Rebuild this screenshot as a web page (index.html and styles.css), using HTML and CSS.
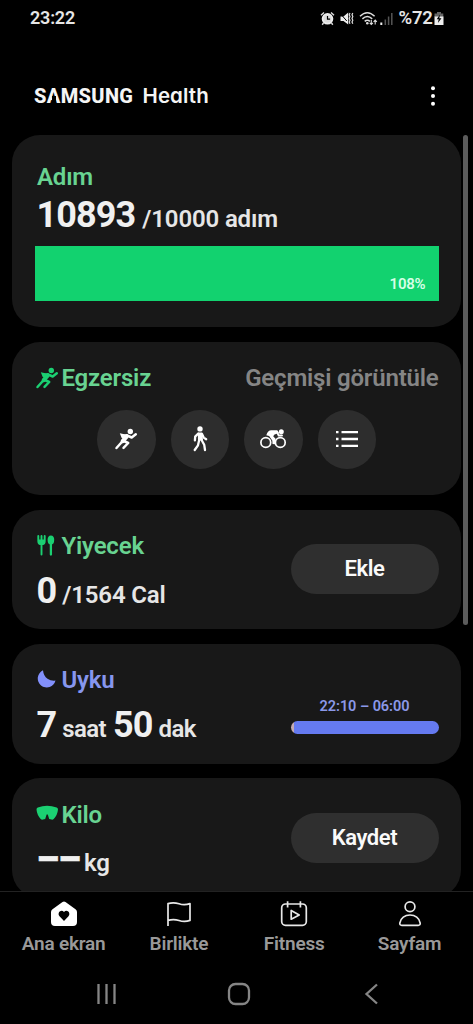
FILE: index.html
```html
<!DOCTYPE html>
<html lang="tr">
<head>
<meta charset="utf-8">
<title>Samsung Health</title>
<link rel="stylesheet" href="styles.css">
</head>
<body>
<svg class="defs" width="0" height="0" aria-hidden="true">
  <symbol id="runner" viewBox="0 0 24 24">
    <circle cx="16.300" cy="4.500" r="2.700"/>
    <path d="M5.800 6.200l3.400.9 5 .3-4.300 4.300-2.200-.7-.9-2.200z"/>
    <path d="M12.700 9.300L8.800 14" fill="none" stroke="currentColor" stroke-width="4.300" stroke-linecap="round"/>
    <path d="M8.300 14.500L2.500 21M13.500 8.700l4.200 1.800 4.100-3.200M9.800 14l4.400 2-4.700 4.800" fill="none" stroke="currentColor" stroke-width="2.500" stroke-linecap="round" stroke-linejoin="round"/>
  </symbol>
</svg>
<div class="screen">
  <div class="statusbar">
    <span class="clock">23:22</span>
    <div class="status-icons">
      <svg class="alarm" viewBox="0 0 15 15"><circle cx="7.500" cy="7.800" r="4.500" fill="none" stroke="#eee" stroke-width="2.600"/><circle cx="7.500" cy="7.800" r="4" fill="#ddd"/><path d="M7.500 5v3.200h2.600" fill="none" stroke="#000" stroke-width="1.200"/><path d="M1 4.200L4 1.500M14 4.200l-3-2.700M3.500 12l-1.300 1.700M11.500 12l1.300 1.700" stroke="#ddd" stroke-width="1.400"/></svg>
      <svg class="mute" viewBox="0 0 15 15"><path d="M1.500 5.500h3L9.200 1.500v12L4.500 10h-3z" fill="#eee"/><path d="M.8 2l7 8" stroke="#000" stroke-width="1"/><path d="M11 2l-.8 1.800.8 1.800-.8 1.800.8 1.800-.8 1.800.8 1.800M13.800 2l-.8 1.800.8 1.800-.8 1.800.8 1.800-.8 1.800.8 1.800" fill="none" stroke="#ddd" stroke-width="1.200"/></svg>
      <svg class="wifi" viewBox="0 0 19 15"><path d="M1 5.300q7.300-7.200 14.600 0M3.400 7.900q4.900-4.700 9.800 0M5.700 10.400q2.600-2.400 5.200 0" fill="none" stroke="#ddd" stroke-width="1.500"/><circle cx="8.300" cy="12.300" r="1.300" fill="#ddd"/><path d="M12.300 9v4.300M10.700 11.800l1.600 1.700 1.600-1.700M16.200 13.500V9.200M14.600 10.800l1.600-1.700 1.600 1.700" fill="none" stroke="#ddd" stroke-width="1.100"/></svg>
      <svg class="signal" viewBox="0 0 13 13"><path d="M1.300 10.500V13" stroke="#eee" stroke-width="2"/><path d="M5.300 7.500V13M8.600 4.500V13M11.800 1V13" stroke="#555" stroke-width="1.500"/></svg>
      <span class="battery-level">%72</span>
      <svg class="battery" viewBox="0 0 10 15"><path d="M3 1h4v1.500h2.300V6H.5V2.500H3z" fill="#666"/><path d="M.5 5.500h9V14h-9z" fill="#eee"/><path d="M6 3.500L2.700 8.300h2l-.8 3.700L7.500 7.200H5.300z" fill="#000"/></svg>
    </div>
  </div>
  <header class="header">
    <div class="brand"><span class="samsung">S<span class="peak">A</span>MSUNG</span><span class="health">Health</span></div>
    <svg class="more" viewBox="0 0 6 20"><circle cx="3" cy="2.300" r="2"/><circle cx="3" cy="10" r="2"/><circle cx="3" cy="17.700" r="2"/></svg>
  </header>
  <main class="cards">
    <section class="card steps">
      <h2 class="title">Adım</h2>
      <p class="value"><b class="count">10893</b><span class="goal">/10000 adım</span></p>
      <div class="progress">108%</div>
    </section>
    <section class="card exercise">
      <div class="row">
        <h2 class="title"><svg class="icon run"><use href="#runner"/></svg>Egzersiz</h2>
        <span class="history">Geçmişi görüntüle</span>
      </div>
      <div class="activities">
        <span class="activity"><svg width="24" height="24"><use href="#runner"/></svg></span>
        <span class="activity"><svg width="26" height="28" viewBox="0 0 26 28"><circle cx="13" cy="3.900" r="2.700"/><path d="M10.800 7.500h4.300l.9 7.500-5 .4z"/><path d="M11 8.700l-2.800 2.900-.3 3.700M15 9l1.700 3.600 2.500 1.600M12.300 14.500l-1.300 5.800-3.300 4.700M14.300 14.500l2.900 5.200.8 5.300" fill="none" stroke="currentColor" stroke-width="2.300" stroke-linecap="round" stroke-linejoin="round"/></svg></span>
        <span class="activity"><svg width="28" height="22" viewBox="0 0 28 22"><circle cx="6.800" cy="14.500" r="4.900" fill="none" stroke="currentColor" stroke-width="1.700"/><circle cx="21.300" cy="14.500" r="4.900" fill="none" stroke="currentColor" stroke-width="1.700"/><circle cx="22.300" cy="3.700" r="2.500"/><path d="M7.300 7.200q1.500-5 5-5h6l1.700 2.900-4.500 1.300-1.300 1.800 2.400 2.600-.6 5.500-2.500-.3-.2-3.600-3.200-4.400z"/><path d="M18 4l1.700 3.500h3.300" fill="none" stroke="currentColor" stroke-width="1.900" stroke-linecap="round"/></svg></span>
        <span class="activity"><svg width="24" height="20" viewBox="0 0 24 20"><path d="M1 3.200h2.500M1 10h2.500M1 16.800h2.500M6.500 3.200h16.500M6.500 10h16.500M6.500 16.800h16.500" stroke="currentColor" stroke-width="2.300"/></svg></span>
      </div>
    </section>
    <section class="card metric">
      <div>
        <h2 class="title"><svg class="icon" viewBox="0 0 24 24"><path d="M3.300 2v5.200q0 3 3.200 3t3.200-3V2M6.500 2v18.500" fill="none" stroke="currentColor" stroke-width="1.900" stroke-linecap="round"/><path d="M4 5.500h5v4H4z"/><ellipse cx="15.900" cy="5.900" rx="3.300" ry="4.500"/><path d="M15.900 9v11.500" stroke="currentColor" stroke-width="2.300" stroke-linecap="round"/></svg>Yiyecek</h2>
        <p class="value"><b>0</b><span class="unit">/1564 Cal</span></p>
      </div>
      <button class="pill">Ekle</button>
    </section>
    <section class="card metric sleep">
      <div>
        <h2 class="title"><svg class="icon" viewBox="0 0 24 24"><path d="M8 2.300Q8.500 8 12.500 10.800q3.500 2.300 8 1.800A9 9 0 1 1 8 2.300z"/></svg>Uyku</h2>
        <p class="value"><b>7</b><span class="unit">saat</span><b class="next">50</b><span class="unit">dak</span></p>
      </div>
      <div class="sleep-time"><span>22:10 – 06:00</span><div class="sleep-bar"></div></div>
    </section>
    <section class="card metric weight">
      <div>
        <h2 class="title"><svg class="icon" viewBox="0 0 24 24"><path d="M1.500 7.500q0-1.500 1.300-2Q12 2 21.700 5.500q1.300.5 1.300 2-.5 5.500-4.300 9.500-.9.900-2.200.6l-2.300-.6-1.400-4.500-1.200 0-1.400 4.500-2.300.6q-1.300.3-2.200-.6Q2 13 1.500 7.500z"/></svg>Kilo</h2>
        <p class="value"><b class="dashes">––</b><span class="unit kg">kg</span></p>
      </div>
      <button class="pill">Kaydet</button>
    </section>
  </main>
  <nav class="tabs">
    <a class="tab"><svg viewBox="0 0 28 28"><path d="M14 1.500q.7 0 1.500.6l10 7.200q1.500 1 1.500 2.800V22q0 4-4 4H5q-4 0-4-4v-9.900q0-1.800 1.500-2.800l10-7.200q.8-.6 1.500-.6z" fill="#fff"/><path d="M14 21l-4.500-4.700c-2.800-3.100 1.700-7.700 4.500-4.200 2.800-3.500 7.300 1.100 4.500 4.200z" fill="#000"/></svg>Ana ekran</a>
    <a class="tab"><svg viewBox="0 0 28 28"><path d="M3 26V3.600q5.500-1.700 11 .2t11-.2v16.800q-5.500 2-11 .1t-11-.1"/></svg>Birlikte</a>
    <a class="tab"><svg viewBox="0 0 28 28"><rect x="1.700" y="4" width="24.600" height="21.300" rx="3.800"/><path d="M7.600 1.300v6.200M20.400 1.300v6.200M11.200 10.500v8.700l8-4.300z"/></svg>Fitness</a>
    <a class="tab"><svg viewBox="0 0 28 28"><circle cx="14" cy="6.800" r="4.900"/><path d="M5.800 25.300q-2.200 0-2-2.200C4.500 17.800 9 15 14 15s9.500 2.800 10.200 8.100q.2 2.200-2 2.200z"/></svg>Sayfam</a>
  </nav>
  <div class="system-nav">
    <svg viewBox="0 0 24 24"><path d="M3.500 2v20M11.500 2v20M19.500 2v20"/></svg>
    <svg viewBox="0 0 24 24"><rect x="2" y="2" width="20" height="20" rx="6.500"/></svg>
    <svg viewBox="0 0 24 24"><path d="M17 2.500L6.500 12 17 21.500"/></svg>
  </div>
  <div class="scrollbar"></div>
</div>
</body>
</html>
```
FILE: styles.css
```css
* { box-sizing: border-box; margin: 0; padding: 0; }
body { background: #000; font-family: Roboto, "Liberation Sans", sans-serif; color: #e6e6e6; }
svg { display: block; fill: currentColor; flex: none; }
.defs { position: absolute; }
.screen { position: relative; width: 473px; height: 1024px; overflow: hidden; display: flex; flex-direction: column; }

.statusbar { height: 36px; padding: 0 29px 0 30px; display: flex; justify-content: space-between; align-items: center; }
.clock { font-size: 18px; font-weight: 600; line-height: 36px; letter-spacing: -0.2px; }
.status-icons { display: flex; align-items: center; height: 36px; }
.alarm { width: 15px; height: 15px; }
.mute { width: 15px; height: 15px; margin-left: 4px; }
.wifi { width: 19px; height: 15px; margin-left: 4.500px; }
.signal { width: 13px; height: 13px; margin-left: 2px; }
.battery-level { font-size: 18.500px; font-weight: 600; margin: 0 1.500px 0 6px; letter-spacing: -0.3px; }
.battery { width: 10px; height: 15px; }

.header { height: 99px; padding: 0 37px 0 34px; display: flex; justify-content: space-between; align-items: flex-start; }
.brand { display: flex; align-items: center; height: 24px; margin-top: 47.500px; color: #f5f5f5; }
.samsung { font-size: 20px; font-weight: 800; letter-spacing: 0.35px; width: 108.500px; }
.peak { position: relative; }
.peak::after { content: ""; position: absolute; left: 5px; top: 12px; width: 4.500px; height: 8px; background: #000; }
.health { font-family: Inter, Roboto, sans-serif; font-feature-settings: "cv11"; font-size: 20.500px; font-weight: 600; letter-spacing: 0.1px; }
.more { width: 6px; height: 20px; margin-top: 49.500px; color: #fff; }

.cards { height: 756px; padding: 0 12px; overflow: hidden; display: flex; flex-direction: column; gap: 14.500px; }
.card { width: 449px; flex: none; border-radius: 28px; background: #181818; padding: 0 22.500px; }
.title { font-size: 24px; font-weight: 600; line-height: 30px; height: 30px; color: #68d391; display: flex; align-items: center; letter-spacing: -0.2px; white-space: nowrap; }
.icon { width: 24px; height: 24px; margin-right: 3px; color: #1bd072; }
.value { font-size: 36px; line-height: 40px; height: 40px; white-space: nowrap; }
.value b { font-weight: 700; color: #f0f0f0; letter-spacing: -0.9px; }
.goal { font-size: 24px; font-weight: 600; margin-left: 7px; letter-spacing: -0.15px; }
.unit { font-size: 24px; font-weight: 600; margin-left: 6px; letter-spacing: -0.15px; }

.steps { height: 192px; padding-top: 27px; }
.steps .title { padding-left: 2.500px; }
.steps .value { padding-left: 2px; margin-top: 3px; }
.progress { height: 55px; margin-top: 11px; background: #12d26f; color: #d6ffe6; font-size: 15px; font-weight: 600; line-height: 20px; padding: 28px 13px 0; text-align: right; letter-spacing: -0.2px; }

.exercise { height: 153.500px; padding-top: 21.500px; }
.row { display: flex; justify-content: space-between; }
.history { font-size: 24px; font-weight: 600; line-height: 30px; color: #858585; letter-spacing: -0.2px; white-space: nowrap; }
.activities { display: flex; justify-content: center; gap: 15px; margin-top: 17px; }
.activity { width: 58.500px; height: 58.500px; border-radius: 50%; background: #2d2d2d; color: #fff; display: grid; place-items: center; }

.metric { height: 119.800px; display: flex; align-items: center; justify-content: space-between; }
.metric .value { margin-top: 9.500px; padding-left: 2px; }
.metric .title { margin-top: 3px; }
.metric .icon { margin-top: -1px; }
.pill { width: 148px; height: 50px; border: 0; border-radius: 25px; background: #2f2f2f; color: #fafafa; font-family: inherit; font-size: 22px; font-weight: 600; line-height: 49px; padding-bottom: 1px; letter-spacing: -0.4px; }
.sleep .title { color: #8696ee; }
.sleep .icon { color: #8290fb; }
.sleep .unit { letter-spacing: -0.6px; }
.value .next { margin-left: 7px; }
.sleep-time { width: 148px; text-align: center; font-size: 14.500px; font-weight: 600; letter-spacing: -0.05px; line-height: 20px; color: #8b98e8; margin-top: 24px; }
.sleep-bar { height: 13px; margin-top: 4px; border-radius: 7px; background: linear-gradient(90deg, #c4aab0 3px, #657af0 3px); }
.value .dashes { font-weight: 900; letter-spacing: -0.5px; -webkit-text-stroke: 0.6px #f0f0f0; }
.value .kg { margin-left: 4px; }

.tabs { height: 70px; border-top: 1px solid #222; display: grid; grid-template-columns: repeat(4, 115.300px); padding: 8px 6px 0; }
.tab { display: flex; flex-direction: column; align-items: center; font-size: 19px; font-weight: 600; line-height: 24px; letter-spacing: -0.2px; color: #999; gap: 4px; }
.tab svg { width: 28px; height: 28px; fill: none; stroke: #e8e8e8; stroke-width: 1.700; stroke-linejoin: round; }
.tab:first-child svg { stroke: none; }
.system-nav { height: 63px; padding: 21px 89.500px 0 94.500px; display: flex; justify-content: space-between; }
.system-nav svg { width: 24px; height: 24px; fill: none; stroke: #858585; stroke-width: 2.300; }
.scrollbar { position: absolute; left: 463px; top: 135px; width: 5px; height: 490px; border-radius: 3px; background: #5c5c5c; }
```
